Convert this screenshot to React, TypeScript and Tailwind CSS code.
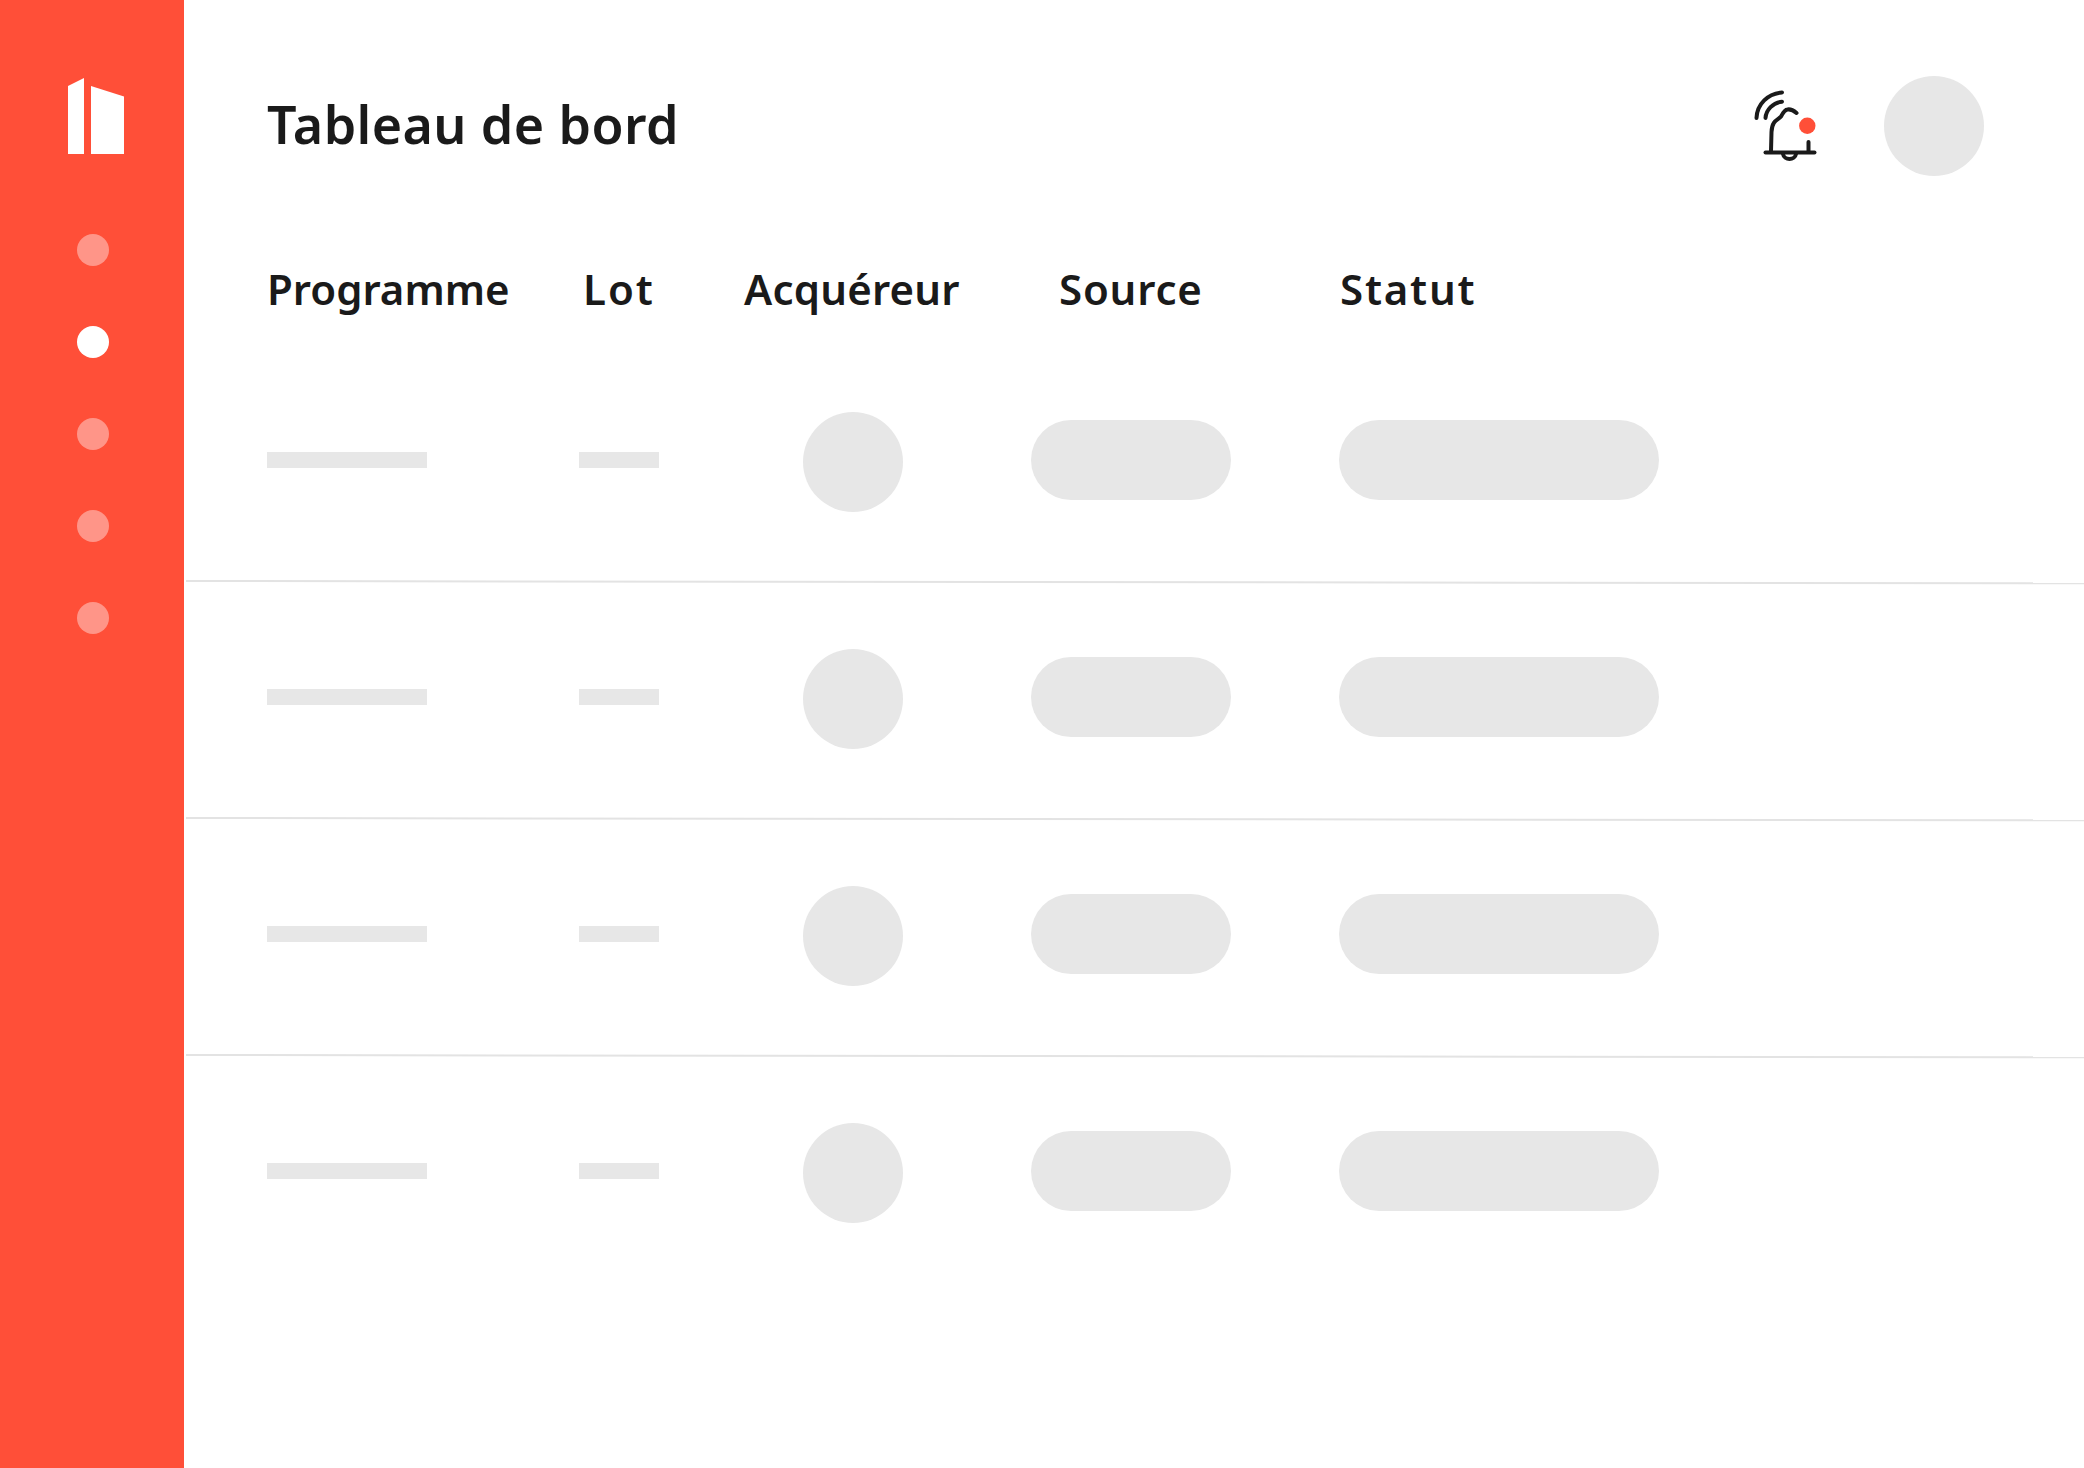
const rows = [0, 1, 2, 3];
const navDots = [false, true, false, false, false];

function BellIcon() {
  return (
    <svg width="70" height="70" viewBox="30 27 70 70" fill="none" stroke="#1a1a1a" strokeWidth="4" strokeLinecap="round" strokeLinejoin="round" className="mb-2 overflow-visible">
      <path d="M36.5 58C37 44 48 33.5 62 32.5" />
      <path d="M45.5 58C46 50 53 42.5 62 41.7" />
      <path d="M76.5 53C73 50 70 49 67.5 49.5C64 50 62.5 54 61 56.5C58 60 52 60 51.5 72L51 91" />
      <path d="M45.5 92.5H94.5" />
      <path d="M88.5 82V92" />
      <path d="M63 94C64 100.5 75 100.5 76 94" />
      <circle cx="87.3" cy="65.7" r="8.2" fill="#ff4f38" stroke="none" />
    </svg>
  );
}

function Logo() {
  return (
    <svg width="58" height="78" viewBox="0 0 58 78" fill="#ffffff">
      <path d="M0 8L16 0V76H0Z" />
      <path d="M23 8L56 18.5V76H23Z" />
    </svg>
  );
}

function App() {
  return (
    <div className="flex h-[1468px] w-[2084px] overflow-hidden bg-white font-['Noto_Sans',sans-serif] text-[#1a1a1a]">
      {/* Sidebar */}
      <aside className="flex w-[184px] shrink-0 flex-col bg-[#ff4f38] pl-[68px] pt-[78px]">
        <Logo />
        <div className="ml-[9px] mt-[78px] flex flex-col gap-[60px]">
          {navDots.map((active, i) => (
            <div key={i} className={active ? "size-8 rounded-full bg-white" : "size-8 rounded-full bg-[#ff9588]"} />
          ))}
        </div>
      </aside>

      <main className="flex min-w-0 flex-1 flex-col">
        {/* Top bar */}
        <header className="flex h-[176px] items-start pl-[83px] pr-[100px] pt-[76px]">
          <h1 className="mt-[16px] text-[52px] font-semibold leading-[64px] tracking-[0.4px]">Tableau de bord</h1>
          <div className="ml-auto flex items-center gap-[64px]">
            <BellIcon />
            <div className="size-[100px] rounded-full bg-[#e7e7e7]" />
          </div>
        </header>

        {/* Table head */}
        <div className="mt-[84px] grid grid-cols-[316px_161px_315px_281px_1fr] pl-[83px] text-[42px] font-semibold leading-[58px]">
          <span>Programme</span>
          <span className="tracking-[2px]">Lot</span>
          <span className="tracking-[0.2px]">Acquéreur</span>
          <span className="tracking-[0.8px]">Source</span>
          <span className="tracking-[1.8px]">Statut</span>
        </div>

        {/* Table rows */}
        <div className="mt-[90px] flex flex-col">
          {rows.map((row) => (
            <div key={row}>
              <div className="grid h-[100px] grid-cols-[312px_224px_228px_308px_1fr] items-center pl-[83px]">
                <div className="h-4 w-40 bg-[#e7e7e7]" />
                <div className="h-4 w-20 bg-[#e7e7e7]" />
                <div className="mt-1 size-[100px] rounded-full bg-[#e7e7e7]" />
                <div className="h-20 w-[200px] rounded-full bg-[#e7e7e7]" />
                <div className="h-20 w-80 rounded-full bg-[#e7e7e7]" />
              </div>
              {row < 3 && <div className="mb-[63px] ml-[2px] mt-[72px] h-[2px] origin-left rotate-[0.07deg] bg-[#e3e3e3]" />}
            </div>
          ))}
        </div>
      </main>
    </div>
  );
}

export default App;
